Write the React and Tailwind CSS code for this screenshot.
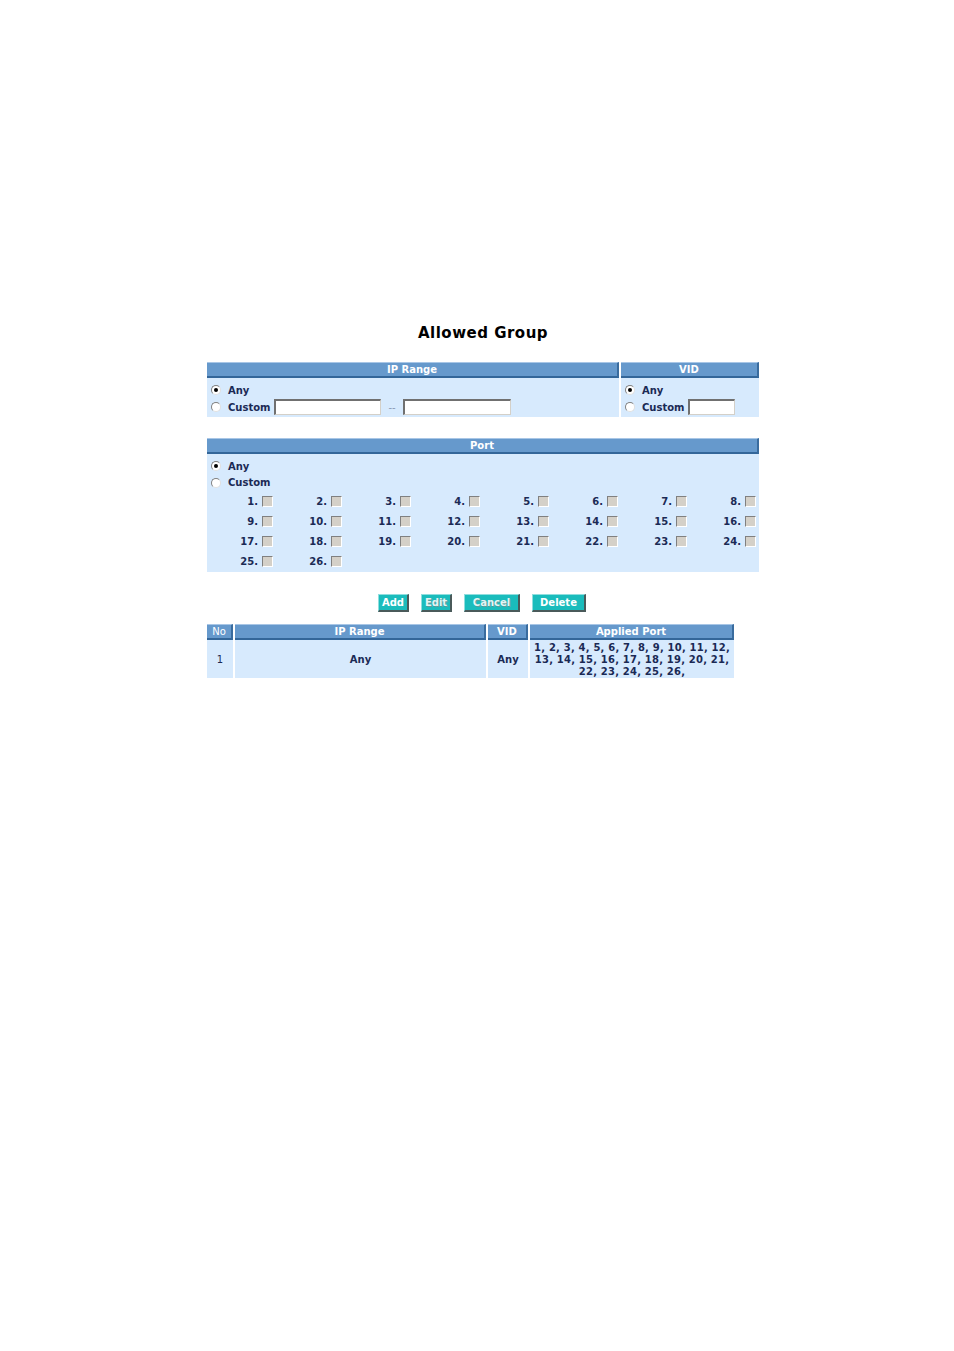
import React from 'react';

const font = "font-['DejaVu_Sans','Verdana',sans-serif]";

function Head({ children, className = '' }) {
  return (
    <div
      className={`h-4 flex items-center justify-center bg-[#6699cc] border-t border-t-[#a8c6e6] border-b-2 border-b-[#336699] border-r-2 border-r-[#3a6c9e] text-white text-[10px] font-bold leading-none ${className}`}
    >
      {children}
    </div>
  );
}

function Radio({ checked }) {
  return (
    <span className="relative inline-block w-[10px] h-[10px] rounded-full bg-white border border-t-[#808080] border-l-[#808080] border-b-[#e0e0e0] border-r-[#e0e0e0] shrink-0">
      {checked && (
        <span className="absolute left-[2px] top-[2px] w-[4px] h-[4px] rounded-full bg-black" />
      )}
    </span>
  );
}

function TextBox({ w }) {
  return (
    <span
      className={`inline-block h-4 bg-white border-t-2 border-l-2 border-t-[#707070] border-l-[#707070] border-b border-r border-b-[#d4d0c8] border-r-[#d4d0c8] ${w}`}
    />
  );
}

function Check() {
  return (
    <span className="inline-block w-[11px] h-[11px] bg-[#d4d0c8] border border-t-[#808080] border-l-[#808080] border-b-white border-r-white" />
  );
}

function Btn({ children, w, disabled }) {
  return (
    <span
      className={`h-[18px] flex items-center justify-center bg-[#1abcbc] border-t border-l border-t-[#8fdede] border-l-[#8fdede] border-b-2 border-r-2 border-b-[#4a5a5a] border-r-[#4a5a5a] text-[10px] font-bold leading-none ${w} ${
        disabled ? 'text-[#e4f4f4] [text-shadow:1px_1px_0_#5e9c9c]' : 'text-white'
      }`}
    >
      {children}
    </span>
  );
}

const ports = Array.from({ length: 26 }, (_, i) => i + 1);

export default function App() {
  return (
    <div className={`min-h-[1351px] bg-white ${font} text-[#1b2a55]`}>
      <div className="w-[552px] ml-[207px] pt-[324px]">
        <div className="text-center text-[15px] font-bold tracking-[0.5px] text-black leading-[18px]">
          Allowed Group
        </div>

        {/* IP range / VID */}
        <div className="mt-[20px] grid grid-cols-[412px_138px] gap-x-[2px]">
          <Head>IP Range</Head>
          <Head>VID</Head>
          <div className="bg-[#d7eafd] pt-[4px] h-[39px] text-[10px] font-bold">
            <div className="h-4 flex items-center gap-[7px] pl-[4px]">
              <Radio checked />
              <span>Any</span>
            </div>
            <div className="h-[18px] flex items-center pl-[4px]">
              <Radio />
              <span className="ml-[7px] mr-[4px]">Custom</span>
              <TextBox w="w-[107px]" />
              <span className="mx-[7px] text-[#8a9ab5] font-normal">--</span>
              <TextBox w="w-[108px]" />
            </div>
          </div>
          <div className="bg-[#d7eafd] pt-[4px] h-[39px] text-[10px] font-bold">
            <div className="h-4 flex items-center gap-[7px] pl-[4px]">
              <Radio checked />
              <span>Any</span>
            </div>
            <div className="h-[18px] flex items-center pl-[4px]">
              <Radio />
              <span className="ml-[7px] mr-[4px]">Custom</span>
              <TextBox w="w-[47px]" />
            </div>
          </div>
        </div>

        {/* Port */}
        <div className="mt-[21px]">
          <Head>Port</Head>
          <div className="bg-[#d7eafd] pt-[4px] pb-[1px] text-[10px] font-bold">
            <div className="h-4 flex items-center gap-[7px] pl-[4px]">
              <Radio checked />
              <span>Any</span>
            </div>
            <div className="h-[17px] flex items-center gap-[7px] pl-[4px]">
              <Radio />
              <span>Custom</span>
            </div>
            <div className="grid grid-cols-8">
              {ports.map((p) => (
                <div key={p} className="h-5 flex items-center justify-end gap-[4px] pr-[3px]">
                  <span>{p}.</span>
                  <Check />
                </div>
              ))}
            </div>
          </div>
        </div>

        {/* Buttons */}
        <div className="mt-[22px] flex justify-center gap-[12px] pr-[2px]">
          <Btn w="w-[31px]">Add</Btn>
          <Btn w="w-[31px]" disabled>Edit</Btn>
          <Btn w="w-[56px]" disabled>Cancel</Btn>
          <Btn w="w-[54px]">Delete</Btn>
        </div>

        {/* Results */}
        <div className="mt-[12px] w-[527px] grid grid-cols-[26px_251px_40px_204px] gap-x-[2px] text-[10px]">
          <Head className="font-normal">No</Head>
          <Head>IP Range</Head>
          <Head>VID</Head>
          <Head>Applied Port</Head>
          <div className="bg-[#d7eafd] h-[38px] flex items-center justify-center">1</div>
          <div className="bg-[#d7eafd] h-[38px] flex items-center justify-center font-bold">Any</div>
          <div className="bg-[#d7eafd] h-[38px] flex items-center justify-center font-bold">Any</div>
          <div className="bg-[#d7eafd] h-[38px] pt-[2px] text-center leading-[12px] font-bold tracking-[0.2px]">
            1, 2, 3, 4, 5, 6, 7, 8, 9, 10, 11, 12, 13, 14, 15, 16, 17, 18, 19, 20, 21, 22, 23, 24, 25, 26,
          </div>
        </div>
      </div>
    </div>
  );
}
